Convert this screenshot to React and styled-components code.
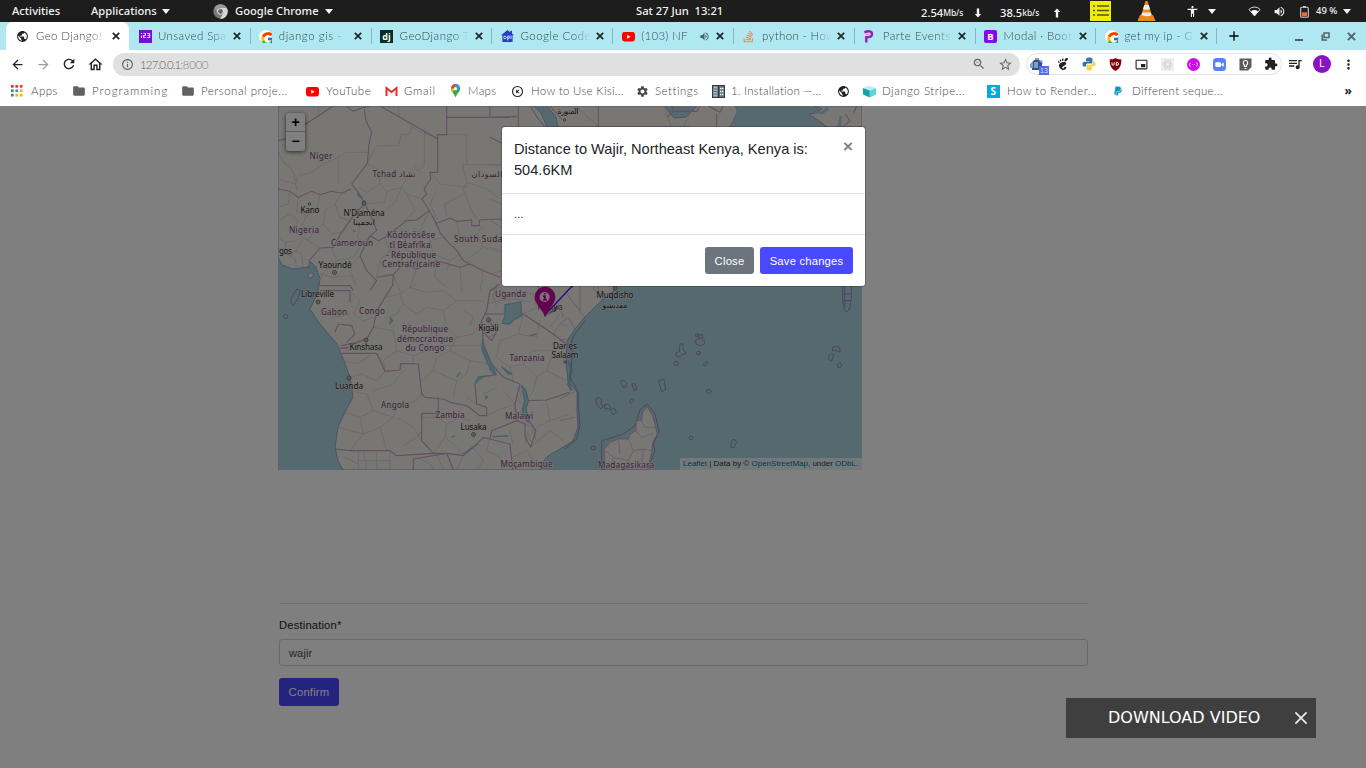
import React from "react";
import styled, { createGlobalStyle } from "styled-components";
import {
  MdPublic, MdSettings, MdFolder, MdExtension, MdQueueMusic, MdOutlineHome, MdArrowBack,
  MdArrowForward, MdRefresh, MdInfoOutline, MdStarBorder, MdZoomOut, MdPictureInPictureAlt,
  MdMoreVert, MdVolumeUp, MdAdd, MdAccessibility,
} from "react-icons/md";
import { FaStackOverflow, FaPaypal } from "react-icons/fa";
import { FcGoogle } from "react-icons/fc";
import { SiGnome } from "react-icons/si";

const Global = createGlobalStyle`
  * { box-sizing: border-box; }
  body { margin: 0; background: #fff; font-family: "Liberation Sans", Arial, sans-serif; }
  svg { display: block; flex: none; }
`;

const Screen = styled.div`
  width: 1366px;
  height: 768px;
  display: flex;
  flex-direction: column;
  overflow: hidden;
`;

/* ---------- desktop bar ---------- */
const DesktopBar = styled.header`
  height: 22px;
  flex: none;
  background: #1d1d1d;
  color: #f2f2f2;
  display: flex;
  align-items: center;
  padding-left: 12px;
  font: 500 11.2px/22px "Noto Sans", "Open Sans", sans-serif;
  white-space: pre;
`;
const BarItem = styled.div`
  width: ${(p) => p.$w}px;
  flex: none;
  display: flex;
  align-items: center;
  height: 22px;
  letter-spacing: ${(p) => p.$ls || 0}px;
  font-size: ${(p) => p.$size || 11.2}px;
  padding-top: ${(p) => p.$drop || 0}px;
`;
const Unit = styled.span`
  font-size: 8.5px;
  letter-spacing: -0.1px;
`;
const Caret = styled.i`
  border: 4px solid transparent;
  border-top: 5px solid #f2f2f2;
  border-bottom: 0;
`;

/* ---------- tabs ---------- */
const TabStrip = styled.nav`
  height: 28px;
  flex: none;
  background: #b0e8f2;
  display: flex;
  padding-left: 6px;
  color: #1f2326;
`;
const Tab = styled.div`
  width: ${(p) => (p.$active ? 123 : 120.8)}px;
  flex: none;
  height: 28px;
  padding: 0 ${(p) => (p.$active ? 6.5 : 5.5)}px 0 ${(p) => (p.$active ? 10 : 9.5)}px;
  background: ${(p) => (p.$active ? "#fff" : "transparent")};
  border-radius: 7px 7px 0 0;
  display: flex;
  align-items: center;
`;
const TabIcon = styled.span`
  width: ${(p) => (p.$active ? 20 : 19.5)}px;
  flex: none;
`;
const TabTitle = styled.span`
  flex: 1;
  min-width: 0;
  margin-right: -2px;
  overflow: hidden;
  white-space: nowrap;
  font: 300 11.5px/28px Lato, "Open Sans", sans-serif;
  letter-spacing: ${(p) => p.$ls ?? 0.4}px;
  color: #3c4a50;
  mask-image: linear-gradient(90deg, #000 75%, transparent 98%);
`;
const TabClose = styled.span`
  width: 14px;
  flex: none;
  display: flex;
  justify-content: center;
  margin-left: 3px;
`;
const Divider = styled.i`
  width: 1px;
  height: 16px;
  background: #8eb3bc;
  align-self: center;
  margin: 0 -1px 0 0;
  flex: none;
`;
const NewTab = styled.span`
  margin-left: 10px;
  display: flex;
  align-items: center;
  color: #000;
`;
const WindowButtons = styled.div`
  margin-left: auto;
  display: flex;
  align-items: center;
  gap: 17px;
  padding-right: 10px;
  color: #50636a;
`;

/* ---------- toolbar ---------- */
const Toolbar = styled.div`
  height: 28px;
  flex: none;
  background: #fff;
  display: flex;
  align-items: center;
  padding: 0 4px;
  color: #202124;
`;
const NavButton = styled.span`
  width: 26px;
  flex: none;
  display: flex;
  justify-content: center;
  color: ${(p) => p.$color || "inherit"};
`;
const Omnibox = styled.div`
  width: 907px;
  flex: none;
  height: 23px;
  border-radius: 12px;
  background: #e0e0e0;
  margin-left: 5px;
  display: flex;
  align-items: center;
  padding: 0 2px 0 1px;
  color: #5f6368;
`;
const Url = styled.span`
  flex: 1;
  font: 300 11.5px/23px Lato, "Open Sans", sans-serif;
  color: #6e5d3e;
  letter-spacing: -0.85px;
  span { color: #858585; letter-spacing: -0.35px; }
`;
const Extensions = styled.div`
  height: 22px;
  width: 256px;
  border: 1px solid #e1e3e6;
  border-radius: 11px;
  margin-left: 6px;
  display: flex;
  align-items: center;
  flex: none;
`;
const ExtensionSlot = styled.span`
  width: 26px;
  display: flex;
  justify-content: center;
  position: relative;
  flex: none;
  margin-left: ${(p) => (p.$first ? -3 : 0)}px;
`;
const CountBadge = styled.b`
  position: absolute;
  left: 15px;
  top: 8px;
  width: 10px;
  height: 9px;
  background: #4f6df5;
  color: #d6ddff;
  font: 7px/9px "Liberation Sans", sans-serif;
  text-align: center;
`;
const Avatar = styled.span`
  width: 18px;
  height: 18px;
  border-radius: 50%;
  background: #8a11c4;
  color: #fff;
  font: 10px/18px Roboto, sans-serif;
  text-align: center;
  margin: 0 4px 0 5px;
  flex: none;
`;

/* ---------- bookmarks ---------- */
const Bookmarks = styled.div`
  height: 28px;
  flex: none;
  background: #fff;
  display: flex;
  padding: 0 0 2px 11px;
  align-items: center;
`;
const Bookmark = styled.a`
  width: ${(p) => p.$w}px;
  flex: none;
  display: flex;
  align-items: center;
  white-space: nowrap;
  font: 300 11.5px/20px Lato, "Open Sans", sans-serif;
  letter-spacing: ${(p) => p.$ls ?? 0.4}px;
  color: #43474b;
`;
const BookmarkIcon = styled.span`
  width: ${(p) => p.$w || 20}px;
  flex: none;
`;
const More = styled.span`
  margin-left: auto;
  padding-right: 14px;
  font: 700 12px/20px "Open Sans", sans-serif;
  color: #202124;
`;

/* ---------- page ---------- */
const Viewport = styled.main`
  flex: 1;
  position: relative;
  background: #fff;
  overflow: hidden;
  font-size: 11.25px;
  line-height: 1.5;
  color: #212529;
`;
const Content = styled.div`
  width: 809px;
  margin-left: 279px;
`;
const MapBox = styled.div`
  width: 584px;
  height: 364px;
  margin-left: -1px;
  position: relative;
  overflow: hidden;
`;
const ZoomControl = styled.div`
  position: absolute;
  left: 8px;
  top: 7px;
  width: 19px;
  border-radius: 3px;
  background: #fff;
  box-shadow: 0 1px 4px rgba(0, 0, 0, 0.65);
`;
const ZoomButton = styled.div`
  height: ${(p) => (p.$top ? 19 : 19)}px;
  border-bottom: ${(p) => (p.$top ? "1px solid #bbb" : "0")};
  font: bold 14px/18px "Liberation Sans", sans-serif;
  text-align: center;
  color: #000;
`;
const Attribution = styled.div`
  position: absolute;
  right: 0;
  bottom: 0;
  width: 182px;
  height: 12px;
  background: rgba(255, 255, 255, 0.7);
  padding-left: 3px;
  font: 8px/11px "Liberation Sans", sans-serif;
  color: #333;
  white-space: nowrap;
  a { color: #0078a8; }
`;
const Form = styled.form`
  margin-top: 133px;
  border-top: 1px solid #e3e3e3;
  padding-top: 13px;
`;
const Label = styled.label`
  display: block;
  height: 17px;
  margin-bottom: 5px;
  letter-spacing: 0.15px;
`;
const Field = styled.div`
  height: 27px;
  border: 1px solid #ced4da;
  border-radius: 3px;
  padding: 0 9px;
  line-height: 26px;
  color: #495057;
`;
const Button = styled.span`
  display: inline-block;
  height: ${(p) => p.$h || 27}px;
  width: ${(p) => p.$w}px;
  line-height: ${(p) => p.$lh || 28}px;
  border-radius: 3px;
  text-align: center;
  color: #fff;
  font-size: 11.25px;
  letter-spacing: 0.2px;
  margin-top: ${(p) => p.$mt || 0}px;
  background: ${(p) => (p.$secondary ? "#6c757d" : "#4949ff")};
`;
const Backdrop = styled.div`
  position: absolute;
  inset: 0;
  background: rgba(0, 0, 0, 0.5);
`;
const Modal = styled.section`
  position: absolute;
  left: 501px;
  top: 20px;
  width: 365px;
  height: 161px;
  background: #fff;
  background-clip: padding-box;
  border: 1px solid rgba(0, 0, 0, 0.2);
  border-radius: 4px;
`;
const ModalHeader = styled.div`
  height: 67px;
  padding: 12px;
  display: flex;
  justify-content: space-between;
  border-bottom: 1px solid #dee2e6;
`;
const ModalTitle = styled.h5`
  margin: 0;
  width: 310px;
  font: 400 14.6px/21px "Liberation Sans", sans-serif;
`;
const ModalClose = styled.span`
  font: 700 17px/16px "Liberation Sans", sans-serif;
  color: #808080;
`;
const ModalBody = styled.div`
  height: 41px;
  padding: 12px;
  border-bottom: 1px solid #dee2e6;
`;
const ModalFooter = styled.div`
  display: flex;
  justify-content: flex-end;
  gap: 6px;
  padding: 12px;
`;
const DownloadBar = styled.aside`
  position: absolute;
  right: 50px;
  bottom: 30px;
  width: 250px;
  height: 40px;
  background: #3f3f3f;
  color: #fff;
  display: flex;
  align-items: center;
  justify-content: space-between;
  padding: 0 8px 0 42px;
  font: 16px/40px "DejaVu Sans", sans-serif;
`;

/* ---------- small drawings ---------- */
const Cross = ({ size = 8, w = 1.7, color = "currentColor" }) => (
  <svg width={size} height={size} viewBox="0 0 8 8" stroke={color} strokeWidth={w}><path d="M.8.8l6.4 6.4M7.2.8L.8 7.2" /></svg>
);
const YouTube = () => (
  <svg width="13" height="13" viewBox="0 0 13 13"><rect y="2" width="13" height="9.4" rx="2.4" fill="#f00" /><path d="M5.2 4.7v4l3.4-2z" fill="#fff" /></svg>
);
const Google = () => (
  <svg width="13" height="13" viewBox="0 0 13 13"><circle cx="6.5" cy="6.5" r="6.5" fill="#fff" /><FcGoogle x="1" y="1" width="11" height="11" /></svg>
);
const Tile = ({ fill, text, color = "#fff", size = 9, r = 0 }) => (
  <svg width="13" height="13" viewBox="0 0 13 13"><rect width="13" height="13" rx={r} fill={fill} />
    <text x="6.5" y={6.4 + size * 0.36} textAnchor="middle" fontFamily="Open Sans" fontWeight="700" fontSize={size} fill={color}>{text}</text></svg>
);
const SpaceMark = () => (
  <svg width="13" height="13" viewBox="0 0 13 13" fill="none" stroke="#f0dcff"><rect width="13" height="13" fill="#7a0bd8" stroke="none" /><path d="M2.500 3v1M2.500 5.500v2.500M4.500 3.500h2v2h-2v2h2.200M8.300 3.500h2.400v4H8.300M8.700 5.500h2" /></svg>
);
const House = () => (
  <svg width="13" height="13" viewBox="0 0 13 13"><path d="M6.500 0L0 5.200h1.400V12h10.200V5.200H13L11 3.600V.8H9.300v1.500z" fill="#2440c8" />
    <circle cx="4" cy="7.500" r="1.300" fill="none" stroke="#c9d5ff" /><path d="M6.700 10.500V6h1.500v2.500H7M10 5.500V9" stroke="#c9d5ff" fill="none" /></svg>
);
const Parte = () => (
  <svg width="13" height="13" viewBox="0 0 13 13" fill="none"><path d="M1.500 2.500C5 .3 9.200 1 9 4.200S5 7.500 2.500 7.400M3.300 6v6.500" stroke="#8a22b8" strokeWidth="2.400" /><path d="M3 4.400h3.400" stroke="#d86be8" /></svg>
);
const AppsGrid = () => (
  <svg width="12" height="12" viewBox="0 0 12 12">
    {["#e33", "#e33", "#e33", "#2a9d4a", "#4285f4", "#f3b400", "#2a9d4a", "#f3b400", "#f3b400"].map((c, i) => (
      <rect key={i} x={(i % 3) * 4.4} y={Math.floor(i / 3) * 4.4} width="2.7" height="2.7" fill={c} />
    ))}
  </svg>
);
const Gmail = () => (
  <svg width="13" height="13" viewBox="0 0 13 13"><path d="M1.500 11V3L6.500 7l5-4v8" fill="#f5f5f5" stroke="#e02f2f" strokeWidth="2" /></svg>
);
const MapsPin = () => (
  <svg width="11" height="14" viewBox="0 0 11 14"><path d="M5.500 0A4.700 4.700 0 001 5c0 3 3 4 4.500 8.500C7 9 10 8 10 5A4.700 4.700 0 005.500 0z" fill="#34a853" />
    <path d="M1.100 4A4.700 4.700 0 015.500 0v5z" fill="#ea4335" /><path d="M5.500 0A4.700 4.700 0 0110 4L5.500 5z" fill="#4285f4" /><path d="M1 5l4.500-1-3 5C1.500 7.500 1 6.500 1 5z" fill="#fbbc04" /><circle cx="5.500" cy="4.700" r="1.600" fill="#fff" /></svg>
);
const Target = () => (
  <svg width="13" height="13" viewBox="0 0 13 13"><circle cx="6.500" cy="6.500" r="5" fill="none" stroke="#222" strokeWidth="1.100" /><path d="M5.200 4.700h1v1.200l1.300-1.200h1L7 6.500l1.500 1.800h-1L6.200 7.100v1.200h-1z" fill="#111" /></svg>
);
const Cabinet = () => (
  <svg width="13" height="13" viewBox="0 0 13 13"><rect x=".5" y=".5" width="12" height="12" fill="#5d7482" stroke="#2e3d47" /><rect x="1.500" y="1.500" width="4" height="10" fill="#a9bac4" /><path d="M6.500 0v13" stroke="#26343d" strokeWidth="1.200" /><path d="M2 4h3M2 6.500h3M2 9h3" stroke="#3c4e59" strokeWidth=".8" /><path d="M8 3.500h3.500M8 6.500h3.500M8 9.500h3.500" stroke="#fff" strokeWidth="1.600" strokeDasharray="1.400 .6" /></svg>
);
const Cube = () => (
  <svg width="13" height="13" viewBox="0 0 13 13"><path d="M0 3l6-2.500L13 3 6.800 5.500z" fill="#b9f1f5" /><path d="M0 3l6.800 2.500v7L0 9.500z" fill="#12a5a8" /><path d="M13 3L6.800 5.500v7L13 9.500z" fill="#5fd3dc" /></svg>
);
const ChromeMark = () => (
  <svg width="15" height="15" viewBox="0 0 15 15"><circle cx="7.500" cy="7.500" r="7.200" fill="#777" /><path d="M7.500 4h6.300a7.200 7.200 0 01-6.800 10.700L10.500 9z" fill="#d5d5d5" /><path d="M1.300 4A7.200 7.200 0 0113.800 4H7.500L4.500 8.800z" fill="#989898" /><circle cx="7.500" cy="7.500" r="3.300" fill="#ddd" /><circle cx="7.500" cy="7.500" r="2.400" fill="#666" /></svg>
);
const Arrow = ({ up }) => (
  <svg width="8" height="10" viewBox="0 0 8 10"><path transform={up ? "" : "rotate(180 4 5)"} d="M4 .5L7.200 4H5.200v5.500H2.800V4H.8z" fill="#f4f4f4" /></svg>
);
const Notes = () => (
  <svg width="21" height="20" viewBox="0 0 21 20"><path d="M0 0h21v20H0z" fill="#eded09" /><path d="M3 5h2M3 9.500h2M3 14h2M7 5h12M7 9.500h12M7 14h12" stroke="#55550a" strokeWidth="1.400" /></svg>
);
const Cone = () => (
  <svg width="19" height="20" viewBox="0 0 19 20"><path d="M3 14h13l2.500 6H.5z" fill="#ef8611" /><path d="M8.500 0h2l4.500 15c-2 2.300-9 2.300-11 0z" fill="#f08a18" /><path d="M7.300 4h4.400l1.300 4c-1.500 1-5.500 1-7 0zM5.200 11.500h8.600l.8 2.500c-2 1.600-8.200 1.600-10.200 0z" fill="#ececec" /></svg>
);
const Wifi = () => (
  <svg width="13" height="11" viewBox="0 0 13 11"><path d="M1 3.500C4 .3 9 .3 12 3.500L6.500 10z" fill="none" stroke="#ddd" /><path d="M3 5.300c2.200-1.600 4.800-1.600 7 0L6.500 10z" fill="#fff" /></svg>
);
const Battery = () => (
  <svg width="9" height="13" viewBox="0 0 9 13"><path d="M3 1h3v1.500H3z" fill="#ccc" /><rect x=".7" y="2.300" width="7.600" height="10" rx="1" fill="none" stroke="#ccc" strokeWidth="1.100" /><path d="M2 7.300h5v4H2z" fill="#ee6a35" /></svg>
);
const Python = () => (
  <svg width="14" height="14" viewBox="0 0 14 14"><path d="M7 .5C4.200.5 4 1.500 4 2.500v1.700h3.500v.6H2.500C1 4.800.5 6 .5 7.200s.6 2.400 2 2.400H4V8.400C4 7 5 6.500 6 6.500h3c1 0 1.500-.6 1.500-1.500V2.500C10.500 1 9 .5 7 .5z" fill="#3773a8" /><path d="M7 13.500c2.800 0 3-1 3-2V9.800H6.500v-.6h5c1.500 0 2-1.200 2-2.400s-.6-2.400-2-2.400H11V6c0 1.200-1 1.700-2 1.700H6c-1 0-1.500.6-1.500 1.500v2.300c0 1.500 1 2 2.500 2z" fill="#ffd043" /></svg>
);
const Shield = () => (
  <svg width="13" height="13" viewBox="0 0 13 13"><path d="M6.500 0c2 1.200 4 1.400 5.800 1.400C12.500 7 11 10.500 6.500 13 2 10.500.5 7 .7 1.400 2.500 1.400 4.500 1.200 6.500 0z" fill="#800009" /><path d="M3 4.500v1.700c0 1.500 2.200 1.500 2.200 0V4.500M7.300 4.300v3h.8c2 0 2-3 0-3z" stroke="#fff" fill="none" /></svg>
);
const Tower = () => (
  <svg width="14" height="13" viewBox="0 0 14 13"><path d="M4 2h5l3 2v8H2V5z" fill="#31518a" /><path d="M0 6l3-3v7H0zM9 3l3-1 1 4z" fill="#7aa2cf" /><path d="M4 5h4M4 7h4M4 9h4" stroke="#dbe8f7" /><path d="M5 1h4" stroke="#1b2c4d" /></svg>
);
const Atom = () => (
  <svg width="13" height="13" viewBox="0 0 13 13"><rect width="13" height="13" fill="#efefef" /><g fill="none" stroke="#d2d2d2" strokeWidth=".8"><ellipse cx="6.500" cy="6.500" rx="5" ry="2" /><ellipse cx="6.500" cy="6.500" rx="5" ry="2" transform="rotate(60 6.500 6.500)" /><ellipse cx="6.500" cy="6.500" rx="5" ry="2" transform="rotate(120 6.500 6.500)" /></g></svg>
);
const Magenta = () => (
  <svg width="13" height="13" viewBox="0 0 13 13"><circle cx="6.500" cy="6.500" r="6.500" fill="#cf08ea" /><path d="M3.600 4.500L2.300 6.500l1.300 2M9.400 4.500l1.300 2-1.300 2M5 6.500h.8M7.200 6.500H8" stroke="#fff" fill="none" strokeWidth=".8" /></svg>
);
const Camera = () => (
  <svg width="13" height="13" viewBox="0 0 13 13"><rect width="13" height="13" rx="3.500" fill="#5c80f8" /><rect x="2.300" y="4.200" width="5.600" height="4.800" rx="1" fill="#fff" /><path d="M8.300 6l2.400-1.600v4.400L8.300 7.300z" fill="#fff" /></svg>
);
const Bulb = () => (
  <svg width="13" height="13" viewBox="0 0 13 13"><path d="M.5.500h12V9L9 12.500H.5z" fill="#5b5b5b" /><path d="M5.500 8.500V7.200C3.300 5.500 4.300 2.500 6.500 2.500s3.200 3 1 4.700v1.300zM5.500 10.500h2" fill="none" stroke="#fff" strokeWidth="1.100" /></svg>
);

/* ---------- map ---------- */
const countries = [
  { t: "Niger", x: 321, y: 158.500, w: 23 }, { t: "Tchad تشاد", x: 394, y: 177, w: 43 }, { t: "السودان", x: 487, y: 177, w: 31 },
  { t: "Nigeria", x: 304, y: 233, w: 30 }, { t: "Cameroun", x: 352, y: 246, w: 42 }, { t: "South Sudan", x: 481, y: 242, w: 54 },
  { t: "Ködörösêse", x: 411, y: 238, w: 48 }, { t: "tî Bêafrîka", x: 410, y: 248, w: 41 }, { t: "- République", x: 411, y: 257.500, w: 50 }, { t: "Centrafricaine", x: 411, y: 267, w: 58 },
  { t: "Gabon", x: 334, y: 315, w: 26 }, { t: "Congo", x: 372, y: 313.500, w: 26 }, { t: "Uganda", x: 510.500, y: 296.500, w: 31 }, { t: "Kenya", x: 550, y: 309.500, w: 25 },
  { t: "République", x: 425, y: 332, w: 46 }, { t: "démocratique", x: 425, y: 341.500, w: 56 }, { t: "du Congo", x: 425, y: 351, w: 39 },
  { t: "Tanzania", x: 527, y: 360.500, w: 35 }, { t: "Angola", x: 395, y: 408, w: 28 }, { t: "Zambia", x: 450, y: 418, w: 29 }, { t: "Malawi", x: 519, y: 418.500, w: 28 },
  { t: "Moçambique", x: 526.500, y: 467, w: 52 }, { t: "Madagasikara", x: 626, y: 467.500, w: 56 },
];
const cities = [
  { t: "Kano", x: 310, y: 213, w: 19 }, { t: "N'Djaména", x: 364, y: 215.500, w: 41 }, { t: "انجمينا", x: 364, y: 225, w: 22 }, { t: "gos", x: 285.500, y: 254, w: 13 },
  { t: "Yaoundé", x: 335, y: 268, w: 33 }, { t: "Libreville", x: 317.500, y: 297, w: 33 }, { t: "Kinshasa", x: 366, y: 350, w: 33 }, { t: "Luanda", x: 349, y: 388.500, w: 28 },
  { t: "Kigali", x: 488.500, y: 331, w: 20 }, { t: "Lusaka", x: 473.500, y: 430, w: 26 }, { t: "Dar es", x: 565, y: 348.500, w: 24 }, { t: "Salaam", x: 565, y: 358, w: 27 },
  { t: "Muqdisho", x: 615, y: 298, w: 37 }, { t: "مقديشو", x: 615, y: 308, w: 25 }, { t: "المنورة", x: 568, y: 113.500, w: 21 },
];
const dots = [[364, 203], [334.500, 272.500], [318, 302], [366, 340], [349, 378], [488.500, 320], [473.500, 434.500], [615, 288]];
const smallDots = [[309.500, 204], [565, 362], [564.500, 120]];

const AfricaMap = () => (
  <svg width="584" height="364" viewBox="278 106 584 364">
    <rect x="278" y="106" width="584" height="364" fill="#aad3df" />
    <path d="M278 106H534L541 113 547 127 600 200 620 250 650 270 620 286 603 299 585 317 575 329 567 341 566 361 568 381 577 392 577 411 578 427 573 441 560 449 548 456 543 462 540 470H343L338 461 335 447 338 427 345 412 353 397 350 377 342 356 337 344 320 324 310 309 318 292 320 279 316 267 311 262 308 267 293 269 282 265 278 257Z" fill="#f2efe9" stroke="#93a9cf" strokeWidth="1" />
    <path d="M547 106H665L668 111 674 118 686 117 692 111 697 106H735L737 112 730 127H558L556 117Z" fill="#f2efe9" stroke="#a98fbd" strokeWidth=".8" />
    <path d="M697 106H735L737 112 733 120 728 127H690L692 116Z" fill="#f2efe9" />
    <path d="M814 106H862V127H827L818 120 809 114 815 113 822 109Z" fill="#f2efe9" stroke="#a98fbd" strokeWidth=".8" />
    <path d="M815 112L822 113 828 108M839 127L841 116" fill="none" stroke="#aad3df" strokeWidth="3" />
    <g fill="none" strokeLinejoin="round">
      <g transform="translate(270 104) scale(.33333)">
        <g stroke="#d6c6d5" strokeWidth="2.200">
          <path d="M24 140L38 172 60 190 72 210 80 258M80 235C78 200 100 218 118 208L160 180 205 160 228 145H292M205 160V240M145 6V32M385 6V38M292 178L320 125H385L393 92H415L428 68 445 80 503 104M463 84V185L445 200 435 195M24 225L75 240M292 178L330 200 328 235 350 262 395 250 410 220 440 185M330 240L290 265 265 250M503 92H590V180M578 182H720M578 182L590 235 580 255 600 310 620 345M590 235L650 255 690 285M480 205L510 240 590 250M456 285L410 270 395 250 375 295 345 320 320 345M350 262L345 295 285 300M410 270L435 320 405 350M503 350L480 300 500 260M530 340L525 300 580 270" />
          <path d="M24 350L60 330 85 350 70 380 100 400 80 440 60 455 24 430M85 280L80 320 110 335 140 320 150 272M110 335L95 365 130 380 160 360 165 320 195 300 215 268M160 360L185 390 215 385M100 400L130 420 150 432M195 300L210 340 240 350M130 380L115 410M24 400L45 415 50 450 75 465 80 490M45 415L75 410M60 455L75 440 95 450 100 490M185 430L200 470 165 500 150 525M200 470L250 460 270 430 300 395M240 350L270 370 262 400 285 420M270 455L240 490 250 520M150 510L190 520 245 515 260 545M345 400L360 440 330 470 320 520M360 440L400 430 410 395 450 380 478 320M400 430L430 450 440 495M450 380L480 410 520 400M480 410L490 450 540 470 530 500M540 470L570 450M560 352L570 400 550 430M570 400L620 390 640 365M620 390L640 430 600 460M640 430L690 445M500 470L495 520 530 550M440 495L420 550M570 490L575 560M640 500L630 560M24 310L55 300 60 262M370 512L390 560" />
        </g>
        <g stroke="#c5a2c5" strokeWidth="3.300">
          <path d="M24 110L50 104M104 62L190 6M228 6L250 22 275 12 300 6M283 15L288 50 305 85 297 120 292 178 245 240 262 262 285 300M330 6L503 104M530 6V92H503V205H480L482 225 462 255 470 270 456 285 478 320 495 350 510 385 530 410 560 440 580 470 600 480M530 40H720M24 255L60 262 85 280 125 262 150 272 185 262 215 268 243 255M285 300L262 320 240 350 215 385 190 430 150 432 118 470V492M285 300L300 330 320 380 300 395 325 410 345 400 410 350 440 348 478 320M300 395L270 455 290 500 320 530 300 560M150 545H240L250 560M320 520L370 512 368 545M370 512L400 480 440 495 500 470 570 490 600 480 640 500 690 520M495 360L540 342 560 352 605 348V365H628V348L690 345 720 360" />
        </g>
        <path d="M262 270l10 4 4 8-8-4zM283 290l3 6M248 378l8 5" stroke="#8bbfd8" strokeWidth="4" fill="#aad3df" />
        <path d="M114 514a8 8 0 1016 0a8 8 0 10-16 0" fill="#f2efe9" stroke="#93a9cf" strokeWidth="3" />
      </g>
      <g transform="translate(270 284) scale(.33333)">
        <g stroke="#d6c6d5" strokeWidth="2.200">
          <path d="M240 20L270 50 250 90 280 110 310 100M150 75L190 100 240 90M345 40L390 30 420 10 470 25 520 20 560 50 640 50M390 30L400 60 380 90 350 100M420 10L440 0M310 130L370 140 380 200 430 215 470 200 480 150 530 130 560 160 540 200 500 220 490 260M380 200L340 230 345 262M530 130L520 80 560 50M560 160L610 150 635 110M540 200L600 230 665 240M600 230L590 270 560 290 550 340M490 260L455 290M490 260L560 290M430 215V240M520 80L470 70 440 90 400 60M520 184H635M580 80L610 100 600 125M200 180L240 200 270 180M220 230L260 240 300 215M235 280L275 270 320 290 345 262M235 320L290 330 310 380 270 400 225 385M310 320L370 300 400 260M310 380L370 400 380 370 440 350 455 330M270 400L280 450 240 500M280 450L330 430 370 400M330 430L350 500M380 400L430 430 455 470M205 430L280 450M400 485L440 460 455 440M265 500V557M225 520L265 540M320 505V557M265 530H360M360 505V557M280 500L290 557M455 400H505L530 420 570 400 600 410M530 420L525 460 560 490 580 515M525 460L490 508M620 360L590 340M650 395L680 380 735 360M610 490L640 530 620 557M580 515L560 557M500 510L520 557M440 520L480 540 490 557" />
          <path d="M660 20L690 10 720 40 750 20 790 30 800 70 760 90M680 0L670 40 690 60M720 40L715 65M650 60L690 50 740 45 780 55M665 30L680 65M700 20L690 50M740 10L735 45M645 90L670 110 680 150 650 160M665 125H690M660 145L685 130M760 90L745 150 690 170 680 220 720 250 760 240 790 200 850 200M745 150L800 160 810 110M720 250L730 290M760 240L800 280 830 260 850 200 895 220M800 280L790 320 770 350M830 260L890 290M830 348L840 410 800 430M840 410L898 390M700 320L735 360M640 330L680 310M660 465L650 500 690 520 700 557M728 520L770 500 800 540M782 490L840 440 880 470M728 480L720 440M620 420L650 440M850 150L870 120 895 130M840 130L870 90" />
          <path d="M740 310L755 330 745 350 760 365 750 385M765 420L790 430 785 450 770 460 790 475M775 440L765 480M790 430L798 470" />
        </g>
        <g stroke="#c5a2c5" strokeWidth="3.500">
          <path d="M150 20H240V55M145 0V20M370 0L345 40 330 65 320 80 310 130 290 165 260 175 215 185M195 145L205 120 245 125 255 150 230 175M205 195L235 190M215 208H320L345 262 390 258 392 238 445 240 455 330 465 340 520 345 540 355 590 365 630 395 650 395V370L620 360 615 300 625 280 680 272M660 20L650 80 635 110 640 180 665 240 700 280 750 300 735 360 740 410 665 440 660 465M505 340V388H455V470L490 508 530 508M197 495L240 500 360 500 380 515 490 508M430 557V525L530 508 550 557M530 508L580 515 610 490 640 460 660 465 720 480 728 557M770 350L830 348 898 325M645 90H760L850 150 895 185M660 20L690 0M800 0L810 20M740 410L765 420 765 460 782 490 798 440 780 415M640 145L665 170 680 140 660 115" />
        </g>
        <g stroke="#8bbfd8" fill="#aad3df" strokeWidth="4">
          <path d="M705 62L752 54 755 95 730 108 720 120 697 118 705 95ZM755 305L768 320 775 350 768 375 780 415 770 412 757 380 764 350Z" />
          <path d="M638 165L645 200 665 240 678 272 664 262 650 230 636 195Z" />
          <path d="M360 100L368 110 358 120M617 298L625 280 650 275M580 510L600 495 625 480M645 335L652 340 645 345M695 248L725 270 715 270ZM667 458L715 456M780 155L800 150M545 460L555 455M560 280L570 265" />
        </g>
        <path d="M65 60L62 45 80 15 90 18 85 40 70 65ZM40 97a7 6 0 1014 0a7 6 0 10-14 0" stroke="#9782b2" strokeWidth="2.500" />
        <path d="M895 230L905 260 895 300 905 320" stroke="#8bbfd8" strokeWidth="8" />
      </g>
      <g transform="translate(560 284) scale(.33333)" stroke="#9782b2" strokeWidth="2.600">
        <path d="M262 360L285 390 297 440 280 480 285 500 262 557H125V470L150 463 190 450 225 425 240 378Z" />
        <path d="M262 368L278 395 292 450 278 475 274 510 262 557H135L133 495 150 475 175 465 205 465 210 450 228 440 228 410 245 410 248 385Z" fill="#f2efe9" stroke="#c0a0c5" />
        <path d="M245 410L255 430 285 430M228 440L245 460 278 450M205 465L220 500 250 495 274 500M220 500L205 530 160 520 135 500M175 465L180 510M205 530L210 557M250 495L245 540M160 520L150 557" stroke="#d0b8d0" />
        <path d="M60 0V85L75 100M0 120L25 100 45 135M60 80L20 30M0 345L45 322M0 410L45 400M125 45L100 15 105 0M0 170L20 165M0 70L10 100" stroke="#cbb0cb" />
        <path d="M75 110L45 150 35 170 37 220 30 280 55 325V370L60 425 50 465 15 495" />
        <path d="M360 180H369V198L379 208 366 212 357 220 348 216 348 206 358 203ZM406 150H414V157H406ZM416 152H428V162H416ZM407 168L420 162 433 170V180L422 185 408 180ZM410 207a5 5 0 1011 0a5 5 0 10-11 0M342 238a7 6 0 1014 0a7 6 0 10-14 0M431 240L440 232 444 237 438 245 431 244ZM182 292L191 289 200 297 198 309 189 309ZM215 300L224 299 231 316 222 319ZM296 290L312 286 317 318 304 322ZM439 320L448 315 454 323 448 328 440 326ZM208 352L216 345 222 352 214 357ZM108 345L116 340 125 347 123 360 130 370 120 374 110 360ZM132 364L143 360 152 368 148 375 136 374ZM150 378L163 372 169 384 160 393ZM387 462a6 5 0 1012 0a6 5 0 10-12 0M513 485L516 468 524 466 529 475 523 491 512 490ZM94 492a6 5 0 1013 0a6 5 0 10-13 0" />
        <path d="M847 -10L848 50 853 80 862 83 870 70 874 45V-10M853 -10L855 70M848 30H872M850 50H872M817 190L830 186 839 190 840 205 832 200 818 200ZM807 215L815 208 821 213 815 232 806 228ZM832 243L839 236 846 243 843 250 834 250Z" />
      </g>
      <g transform="translate(490 104) scale(.33333)" stroke="#c5a2c5" strokeWidth="3.300">
        <path d="M0 6V40M0 40L80 38M85 6V68M325 6V68M545 6L550 22 530 40M545 22H620L630 6M0 100L40 120M120 6L145 45 165 68M655 6L690 25 700 6M680 30V68M1065 30L1080 50 1060 68M1100 6L1090 30M180 6L215 45" />
        <path d="M258 6L325 68M0 183H36M0 285L35 300M0 350L36 370M0 430L36 440M0 510L36 500M325 548V570M380 545L375 570M520 6L545 68M600 30L580 68" stroke="#d6c6d5" strokeWidth="2.500" />
      </g>
    </g>
    <g fontFamily="Noto Sans, DejaVu Sans, sans-serif" textAnchor="middle" fontSize="8.200">
      {countries.map((c) => <text key={c.t} x={c.x} y={c.y} textLength={c.w} fill="#7d427e" stroke="#f2efe9" strokeWidth="1.200" paintOrder="stroke">{c.t}</text>)}
      {cities.map((c) => <text key={c.t} x={c.x} y={c.y} textLength={c.w} fill="#2b2b2b" stroke="#f2efe9" strokeWidth="1.200" strokeOpacity=".7" paintOrder="stroke">{c.t}</text>)}
    </g>
    <g fill="#f2efe9" stroke="#555" strokeWidth=".8">
      {dots.map(([x, y]) => <g key={x}><circle cx={x} cy={y} r="2" /><circle cx={x} cy={y} r=".4" /></g>)}
      {smallDots.map(([x, y]) => <circle key={x} cx={x} cy={y} r="1.200" />)}
    </g>
    <path d="M545 315L574 284" stroke="#5a1cff" strokeWidth="1.500" />
    <path d="M569 284h6l-3 4z" fill="#d3002b" />
    <path d="M546 316l9-9 5-2-3 5z" fill="#000" opacity=".35" />
    <path d="M545 316.500C543 309 535 304 535 297a10 10 0 0120 0c0 7-8 12-10 19.500z" fill="#d000a4" stroke="#a40083" strokeWidth=".7" />
    <circle cx="544.600" cy="297" r="5" fill="#f7e7f4" />
    <path d="M543 296h2v3.500M543 299.700h4M544 293.700h1.500" stroke="#c0009a" strokeWidth="1.500" />
  </svg>
);

const tabs = [
  { t: "Unsaved Spa", i: <SpaceMark /> },
  { t: "django gis -", i: <Google />, ls: 0.55 },
  { t: "GeoDjango T", i: <Tile fill="#092e20" text="dj" size={9} />, ls: 0.45 },
  { t: "Google Code", i: <House />, ls: 0.5 },
  { t: "(103) NF", i: <YouTube />, sound: true, ls: 0.3 },
  { t: "python - How", i: <FaStackOverflow size={13} color="#e08a4c" />, ls: 0.35 },
  { t: "Parte Events", i: <Parte />, ls: 0.5 },
  { t: "Modal · Boot", i: <Tile fill="#8a06f0" text="B" r={2} size={9.500} />, ls: 0.4 },
  { t: "get my ip - G", i: <Google />, ls: 0.35 },
];
const folder = <MdFolder size={14} color="#606266" />;
const bookmarks = [
  { t: "Apps", w: 61, i: <AppsGrid /> }, { t: "Programming", w: 109, i: folder, ls: 1 }, { t: "Personal proje...", w: 125, i: folder, ls: 0.5 },
  { t: "YouTube", w: 79, i: <YouTube />, ls: 0.65 }, { t: "Gmail", w: 65, i: <Gmail />, iw: 19, ls: 0.7 }, { t: "Maps", w: 61, i: <MapsPin />, iw: 18 },
  { t: "How to Use Kisi...", w: 125, i: <Target />, ls: 0.3 }, { t: "Settings", w: 76, i: <MdSettings size={13} />, iw: 19, ls: 0.5 }, { t: "1. Installation —...", w: 125, i: <Cabinet />, iw: 19, ls: 0.2 },
  { t: "", w: 26, i: <MdPublic size={13} color="#202124" /> }, { t: "Django Stripe...", w: 124, i: <Cube />, iw: 19, ls: 0.5 },
  { t: "How to Render...", w: 126, i: <Tile fill="#08a8dc" text="S" size={10} />, ls: 0.45 }, { t: "Different seque...", w: 120, i: <FaPaypal size={10} color="#1594c4" />, iw: 19, ls: 0.3 },
];

export default function App() {
  return (
    <Screen>
      <Global />
      <DesktopBar>
        <BarItem $w={79}>Activities</BarItem>
        <BarItem $w={71}>Applications</BarItem>
        <BarItem $w={51}><Caret /></BarItem>
        <BarItem $w={22}><ChromeMark /></BarItem>
        <BarItem $w={90}>Google Chrome</BarItem>
        <BarItem $w={311}><Caret /></BarItem>
        <BarItem $w={285}>Sat 27 Jun  13:21</BarItem>
        <BarItem $w={53} $drop={3}>2.54<Unit>Mb/s</Unit></BarItem>
        <BarItem $w={26} $drop={3}><Arrow /></BarItem>
        <BarItem $w={53} $drop={3}>38.5<Unit>kb/s</Unit></BarItem>
        <BarItem $w={37} $drop={3}><Arrow up /></BarItem>
        <BarItem $w={47}><Notes /></BarItem>
        <BarItem $w={49}><Cone /></BarItem>
        <BarItem $w={22}><MdAccessibility size={13} /></BarItem>
        <BarItem $w={40}><Caret /></BarItem>
        <BarItem $w={25}><Wifi /></BarItem>
        <BarItem $w={27}><MdVolumeUp size={13} /></BarItem>
        <BarItem $w={16}><Battery /></BarItem>
        <BarItem $w={27} $size={9.5}>49 %</BarItem>
        <Caret />
      </DesktopBar>
      <TabStrip>
        <Tab $active>
          <TabIcon $active><MdPublic size={13} /></TabIcon><TabTitle $ls={0.35}>Geo Django!</TabTitle><TabClose><Cross /></TabClose>
        </Tab>
        {tabs.map((tab) => (
          <React.Fragment key={tab.t}>
            <Tab>
              <TabIcon>{tab.i}</TabIcon><TabTitle $ls={tab.ls}>{tab.t}</TabTitle>
              {tab.sound && <MdVolumeUp size={11} color="#46646c" />}
              <TabClose><Cross /></TabClose>
            </Tab>
            <Divider />
          </React.Fragment>
        ))}
        <NewTab><MdAdd size={16} /></NewTab>
        <WindowButtons>
          <svg width="9" height="9" viewBox="0 0 9 9"><path d="M0 8h8" stroke="currentColor" strokeWidth="2" /></svg>
          <svg width="9" height="9" viewBox="0 0 9 9" fill="none" stroke="currentColor" strokeWidth="1.500"><path d="M3 1h5v4.500H3zM1.200 2.500V8H6" /></svg>
          <Cross size={9} />
        </WindowButtons>
      </TabStrip>
      <Toolbar>
        <NavButton><MdArrowBack size={15} /></NavButton>
        <NavButton $color="#9b9da0"><MdArrowForward size={15} /></NavButton>
        <NavButton><MdRefresh size={16} /></NavButton>
        <NavButton><MdOutlineHome size={17} /></NavButton>
        <Omnibox>
          <NavButton><MdInfoOutline size={13} /></NavButton>
          <Url>127.0.0.1<span>:8000</span></Url>
          <NavButton><MdZoomOut size={14} /></NavButton>
          <NavButton><MdStarBorder size={15} /></NavButton>
        </Omnibox>
        <Extensions>
          <ExtensionSlot $first><Tower /><CountBadge>13</CountBadge></ExtensionSlot>
          <ExtensionSlot><SiGnome size={12} /></ExtensionSlot>
          <ExtensionSlot><Python /></ExtensionSlot>
          <ExtensionSlot><Shield /></ExtensionSlot>
          <ExtensionSlot><MdPictureInPictureAlt size={13} /></ExtensionSlot>
          <ExtensionSlot><Atom /></ExtensionSlot>
          <ExtensionSlot><Magenta /></ExtensionSlot>
          <ExtensionSlot><Camera /></ExtensionSlot>
          <ExtensionSlot><Bulb /></ExtensionSlot>
          <ExtensionSlot><MdExtension size={14} /></ExtensionSlot>
        </Extensions>
        <NavButton><MdQueueMusic size={16} /></NavButton>
        <Avatar>L</Avatar>
        <NavButton><MdMoreVert size={15} /></NavButton>
      </Toolbar>
      <Bookmarks>
        {bookmarks.map((b, n) => (
          <Bookmark key={n} $w={b.w} $ls={b.ls}><BookmarkIcon $w={b.iw}>{b.i}</BookmarkIcon>{b.t}</Bookmark>
        ))}
        <More>»</More>
      </Bookmarks>
      <Viewport>
        <Content>
          <MapBox>
            <AfricaMap />
            <ZoomControl><ZoomButton $top>+</ZoomButton><ZoomButton>−</ZoomButton></ZoomControl>
            <Attribution><a>Leaflet</a> | Data by © <a>OpenStreetMap</a>, under <a>ODbL.</a></Attribution>
          </MapBox>
          <Form>
            <Label>Destination*</Label>
            <Field>wajir</Field>
            <Button $w={60} $h={28} $mt={12}>Confirm</Button>
          </Form>
        </Content>
        <Backdrop />
        <Modal>
          <ModalHeader>
            <ModalTitle>Distance to Wajir, Northeast Kenya, Kenya is: 504.6KM</ModalTitle>
            <ModalClose>×</ModalClose>
          </ModalHeader>
          <ModalBody>...</ModalBody>
          <ModalFooter>
            <Button $secondary $w={49} $lh={29}>Close</Button>
            <Button $w={93} $lh={29}>Save changes</Button>
          </ModalFooter>
        </Modal>
        <DownloadBar>DOWNLOAD VIDEO<Cross size={14} w={0.95} color="#eee" /></DownloadBar>
      </Viewport>
    </Screen>
  );
}
